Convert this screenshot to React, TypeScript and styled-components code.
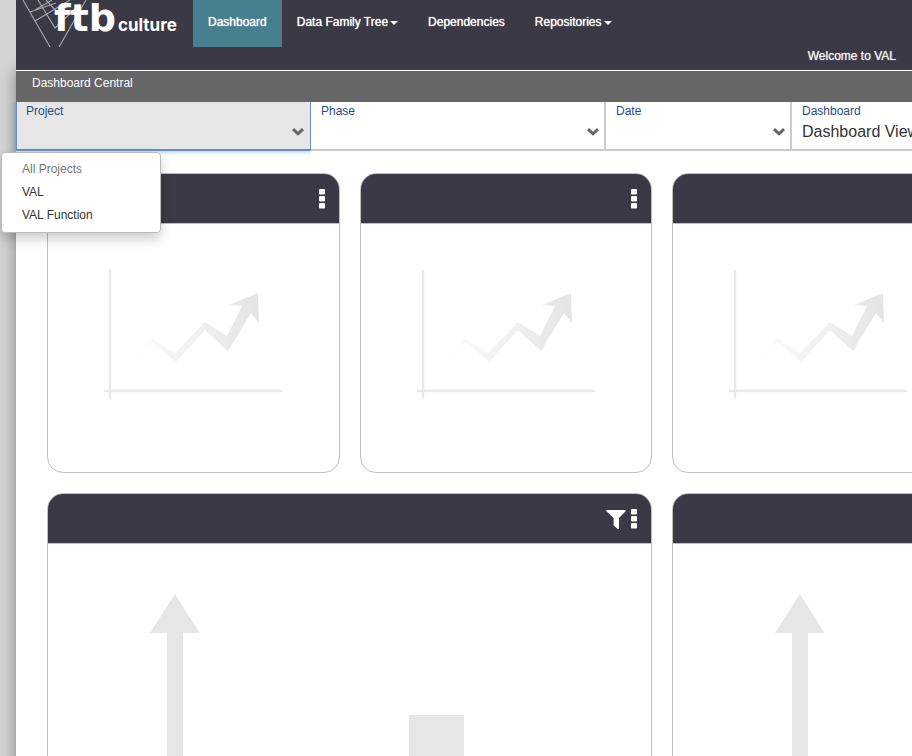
import React from "react";
import styled, { createGlobalStyle } from "styled-components";

const GlobalStyle = createGlobalStyle`
  *, *::before, *::after { box-sizing: border-box; }
  body {
    margin: 0;
    background: #d3d3d3;
    font-family: "Liberation Sans", Arial, sans-serif;
    font-size: 12px;
    line-height: 16px;
    color: #333;
    overflow: hidden;
  }
  button, select { font: inherit; color: inherit; }
`;

const Page = styled.div`
  margin-left: 16px;
  min-height: 100vh;
  display: flex;
  flex-direction: column;
`;

const Header = styled.header`
  position: relative;
  z-index: 1;
  display: flex;
  flex-direction: column;
  background: #3a3945;
  color: #fff;
  border-bottom: 1px solid #fff;
`;

const HeaderTop = styled.div`
  display: flex;
  height: 47px;
`;

const Logo = styled.a`
  position: relative;
  width: 177px;
  padding-left: 38px;
  display: flex;
  align-items: baseline;
  gap: 2px;
  color: #fff;
  text-decoration: none;
`;

const Web = styled.svg`
  position: absolute;
  left: 0;
  top: 0;
`;

const LogoMain = styled.span`
  position: relative;
  font-family: "DejaVu Sans", sans-serif;
  font-size: 38px;
  line-height: 36px;
  font-weight: 700;
`;

const LogoSub = styled.span`
  position: relative;
  font-family: Inter, sans-serif;
  font-size: 17px;
  font-weight: 700;
`;

const Nav = styled.nav`
  display: flex;
`;

const NavLink = styled.a<{ $active?: boolean }>`
  display: flex;
  align-items: center;
  gap: 2px;
  padding: 0 15px 4px;
  color: #fff;
  text-decoration: none;
  text-shadow: 0 0 1px #fff;
  background: ${(p) => (p.$active ? "#477f8f" : "transparent")};
`;

const Caret = styled.span`
  margin-top: 2px;
  border: 4px solid transparent;
  border-top-color: #fff;
  border-bottom: 0;
`;

const Welcome = styled.p`
  margin: 0;
  padding: 1px 16px 6px;
  text-align: right;
  text-shadow: 0 0 1px #eee;
  color: #eee;
`;

const Content = styled.div`
  flex: 1;
  background: #fff;
  box-shadow: 0 0 14px rgba(0, 0, 0, 0.4);
`;

const TitleBar = styled.h1`
  margin: 0;
  padding: 4px 16px 11px;
  font-size: 12px;
  line-height: 16px;
  font-weight: 400;
  background: #666;
  color: #fff;
`;

const Filters = styled.div`
  display: flex;
  height: 49px;
`;

const Field = styled.div<{ $width: number; $open?: boolean }>`
  position: relative;
  flex: 0 0 ${(p) => p.$width}px;
  display: flex;
  flex-direction: column;
  padding: 1px 4px 0 ${(p) => (p.$open ? 9 : 10)}px;
  background: ${(p) => (p.$open ? "#e6e6e6" : "#fff")};
  border: solid ${(p) => (p.$open ? "#6a8dc4" : "#ccc")};
  border-width: ${(p) => (p.$open ? "0 1px 2px" : "0 2px 2px 0")};
  box-shadow: ${(p) => (p.$open ? "0 0 5px rgba(80, 140, 220, 0.7)" : "none")};
  clip-path: ${(p) => (p.$open ? "inset(0 0 -100px -16px)" : "none")};
  z-index: ${(p) => (p.$open ? 2 : 0)};
`;

const FieldLabel = styled.label`
  color: #1f4e86;
`;

const FieldRow = styled.div`
  display: flex;
  align-items: center;
  height: 25px;
`;

const Select = styled.select`
  flex: 1;
  min-width: 0;
  appearance: none;
  border: 0;
  padding: 0;
  background: transparent;
  font-size: 16px;
  line-height: 20px;
`;

const Picker = styled.button`
  flex: 1;
  display: flex;
  align-items: center;
  justify-content: flex-end;
  align-self: stretch;
  border: 0;
  padding: 0 1px 0 0;
  background: transparent;
  outline: none;
`;

const Menu = styled.ul`
  position: absolute;
  left: -16px;
  top: 50px;
  width: 160px;
  margin: 0;
  padding: 5px 0 5px;
  list-style: none;
  background: #fff;
  border: 1px solid #bbb;
  border-radius: 4px;
  box-shadow: 0 6px 12px rgba(0, 0, 0, 0.2);
`;

const MenuItem = styled.li<{ $muted?: boolean }>`
  padding: 3px 20px 4px;
  color: ${(p) => (p.$muted ? "#777" : "#333")};
`;

const Cards = styled.main`
  min-width: 1292px;
  padding: 22px 31px;
  display: grid;
  grid-template-columns: repeat(4, minmax(0, 1fr));
  gap: 20px;
`;

const Card = styled.section<{ $span?: number }>`
  grid-column: span ${(p) => p.$span ?? 1};
  min-height: 300px;
  display: flex;
  flex-direction: column;
  border: 1px solid #bfbfbf;
  border-radius: 16px;
  background: #fff;
  overflow: hidden;
`;

const CardHeader = styled.header`
  display: flex;
  align-items: center;
  justify-content: flex-end;
  gap: 4px;
  height: 50px;
  padding-right: 13px;
  background: #3a3945;
  border-bottom: 1px solid #bfbfbf;
`;

const IconButton = styled.button`
  display: flex;
  border: 0;
  padding: 0;
  background: transparent;
  color: #fff;
`;

const CardBody = styled.div<{ $top: number; $left: number }>`
  padding: ${(p) => p.$top}px 0 0 ${(p) => p.$left}px;
`;

const Drawing = styled.svg`
  display: block;
`;

function Chevron() {
  return (
    <svg width="14" height="10" viewBox="0 0 14 10" aria-hidden="true">
      <path d="M2 2.2 L7 6.8 L12 2.2" fill="none" stroke="#666" strokeWidth="3" />
    </svg>
  );
}

function CardMenu() {
  return (
    <IconButton aria-label="Card options">
      <svg width="8" height="20" viewBox="0 0 8 20" fill="currentColor">
        <rect x="1" y="0" width="6" height="5.5" rx="1" />
        <rect x="1" y="7" width="6" height="5.5" rx="1" />
        <rect x="1" y="14" width="6" height="5.5" rx="1" />
      </svg>
    </IconButton>
  );
}

function Filter() {
  return (
    <IconButton aria-label="Filter">
      <svg width="20" height="20" viewBox="0 0 20 20" fill="currentColor">
        <path d="M1.2 1 H18.8 Q20.3 1.300 19.4 2.500 L13 9 V20 Q12.6 20.500 11.8 20 L7.600 16.500 V9 L.6 2.500 Q-.3 1.300 1.2 1Z" />
      </svg>
    </IconButton>
  );
}

function TrendDrawing({ id }: { id: string }) {
  return (
    <Drawing width="180" height="132" viewBox="0 0 180 132" aria-hidden="true">
      <defs>
        <linearGradient id={id} x1="0" x2="1" y1="0" y2="0">
          <stop offset="0" stopColor="#fcfcfc" />
          <stop offset="1" stopColor="#e4e4e4" />
        </linearGradient>
      </defs>
      <path d="M6 1V130M0 122H178" stroke="#e9e9e9" strokeWidth="2.4" />
      <path
        fill={`url(#${id})`}
        d="M30 94 L48 69 L71 84 L101 53 L123 67 L138 37 L125 36 L154 24 L155 54 L147 44 L124 82 L101 61 L72 93 L48 73Z"
      />
    </Drawing>
  );
}

function BarDrawing() {
  return (
    <Drawing width="480" height="300" viewBox="0 0 480 300" fill="#e6e6e6" aria-hidden="true">
      <path d="M25 0 L49.500 39H33V300H17V39H0Z" />
      <rect x="259" y="121" width="55" height="179" />
    </Drawing>
  );
}

export default function App() {
  return (
    <>
      <GlobalStyle />
      <Page>
        <Header>
          <HeaderTop>
            <Logo href="#" aria-label="ftb culture">
              <Web width="80" height="47" viewBox="0 0 80 47" fill="none" stroke="#a2a2aa" strokeWidth="1.2">
                <path d="M7 0L34 47M70 0L43 47M19 21L54 0M22 0L39 28L64 4M19 10L36 0M30 0L44 15M14 12L40 3" />
              </Web>
              <LogoMain>ftb</LogoMain>
              <LogoSub>culture</LogoSub>
            </Logo>
            <Nav>
              <NavLink href="#" $active>Dashboard</NavLink>
              <NavLink href="#">Data Family Tree<Caret /></NavLink>
              <NavLink href="#">Dependencies</NavLink>
              <NavLink href="#">Repositories<Caret /></NavLink>
            </Nav>
          </HeaderTop>
          <Welcome>Welcome to VAL</Welcome>
        </Header>
        <Content>
          <TitleBar>Dashboard Central</TitleBar>
          <Filters>
            <Field $width={295} $open>
              <FieldLabel htmlFor="project">Project</FieldLabel>
              <FieldRow>
                <Picker id="project" aria-haspopup="listbox" aria-expanded="true">
                  <Chevron />
                </Picker>
              </FieldRow>
              <Menu role="listbox" aria-label="Project">
                <MenuItem role="option" $muted>All Projects</MenuItem>
                <MenuItem role="option">VAL</MenuItem>
                <MenuItem role="option">VAL Function</MenuItem>
              </Menu>
            </Field>
            <Field $width={295}>
              <FieldLabel htmlFor="phase">Phase</FieldLabel>
              <FieldRow>
                <Select id="phase" />
                <Chevron />
              </FieldRow>
            </Field>
            <Field $width={186}>
              <FieldLabel htmlFor="date">Date</FieldLabel>
              <FieldRow>
                <Select id="date" />
                <Chevron />
              </FieldRow>
            </Field>
            <Field $width={295}>
              <FieldLabel htmlFor="view">Dashboard</FieldLabel>
              <FieldRow>
                <Select id="view">
                  <option>Dashboard View</option>
                </Select>
                <Chevron />
              </FieldRow>
            </Field>
          </Filters>
          <Cards>
            {["a", "b", "c", "d"].map((id) => (
              <Card key={id}>
                <CardHeader>
                  <CardMenu />
                </CardHeader>
                <CardBody $top={45} $left={56}>
                  <TrendDrawing id={`trend-${id}`} />
                </CardBody>
              </Card>
            ))}
            {["e", "f"].map((id) => (
              <Card key={id} $span={2}>
                <CardHeader>
                  <Filter />
                  <CardMenu />
                </CardHeader>
                <CardBody $top={50} $left={102}>
                  <BarDrawing />
                </CardBody>
              </Card>
            ))}
          </Cards>
        </Content>
      </Page>
    </>
  );
}
